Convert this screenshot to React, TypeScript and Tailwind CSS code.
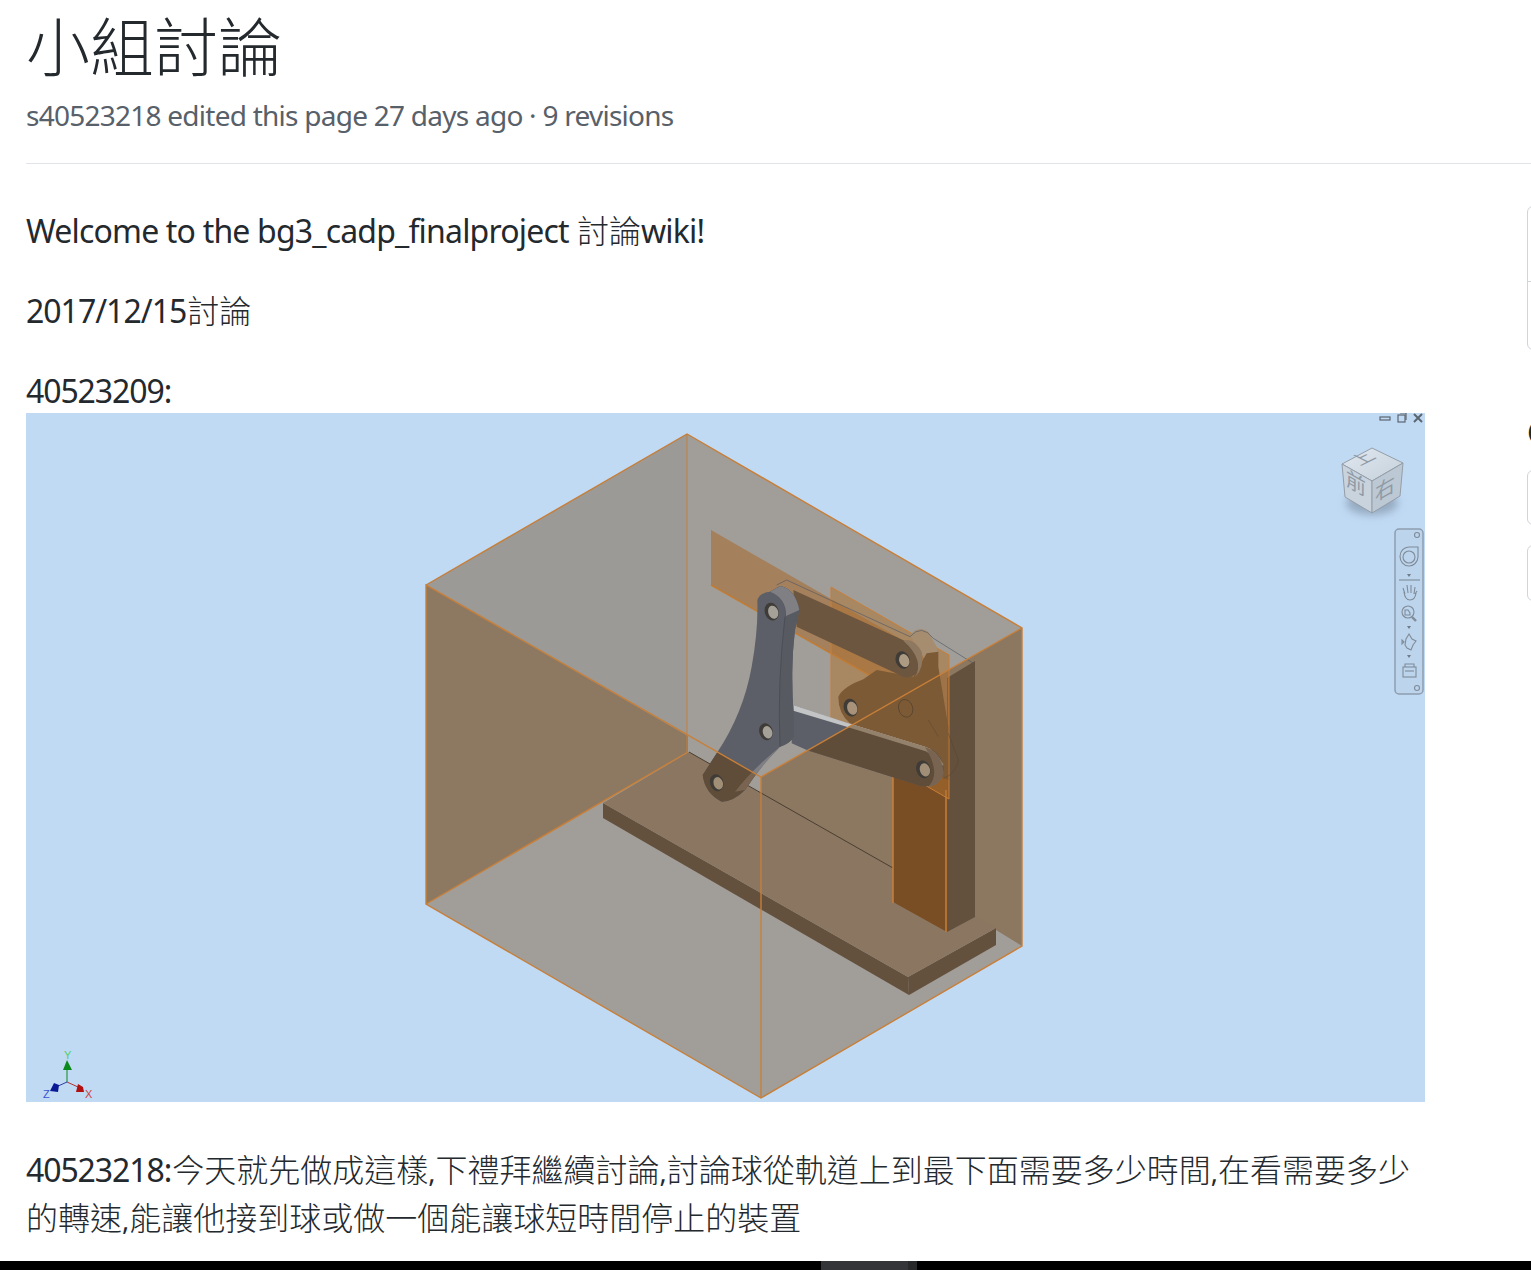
const BODY_FONT = "[font-family:'Noto_Sans','Noto_Sans_CJK_TC',sans-serif]";

type Palette = { face: string; side: string; lug: string; band: string; hole: string };

const GRAY: Palette = { face: '#5c5f68', side: '#585a61', lug: '#7f7f84', band: '#c2c4c6', hole: '#a5a198' };
const TINTED: Palette = { face: '#5f4d3a', side: '#5a4937', lug: '#786450', band: '#93816c', hole: '#a08e76' };

// narrows the latin runs so they sit like the original font, cjk stays full width
function Mixed({ text, tracking }: { text: string; tracking: string }) {
  const parts = text.split(/([\x00-\x7f]+)/).filter(Boolean);
  return (
    <>
      {parts.map((part, i) => {
        if (part === ',') return <span key={i} className="text-[27px] leading-none">,</span>;
        if (/^[\x00-\x7f]/.test(part)) return <span key={i} className={tracking}>{part}</span>;
        return <span key={i} className="font-light">{part}</span>;
      })}
    </>
  );
}

function Hole({ cx, cy, rx = 21, ry = 27, inner }: { cx: number; cy: number; rx?: number; ry?: number; inner: string }) {
  return (
    <g transform={`rotate(-18 ${cx} ${cy})`}>
      <ellipse cx={cx} cy={cy} rx={rx} ry={ry} fill="#3f3c38" />
      <ellipse cx={cx + 4} cy={cy + 3} rx={rx - 6} ry={ry - 7} fill={inner} />
    </g>
  );
}

// lower link + big crank, drawn twice so the part behind the wall can be tinted
function FrontParts({ p }: { p: Palette }) {
  return (
    <g>
      <path d="M340,555 L500,610 L735,682 Q790,695 792,760 Q770,808 720,797 L380,690 L335,670 Z" fill={p.face} />
      <path d="M340,555 L500,608 L735,680 Q770,690 790,735 L772,745 Q760,695 725,690 L500,620 L340,572 Z" fill={p.band} />
      <path d="M735,682 Q782,692 792,760 Q775,800 745,800 Q785,760 735,682 Z" fill={p.lug} />
      <Hole cx={730} cy={748} inner={p.hole} />
      <path d="M232,240 Q240,218 270,215 L300,198 Q345,205 358,270 L345,330 Q330,450 342,600 L342,650 Q330,670 300,680 Q240,740 195,810 Q160,845 125,845 Q75,820 68,765 L110,700 Q190,580 215,440 Q235,330 232,240 Z" fill={p.face} />
      <path d="M270,215 L300,198 Q345,205 358,270 L345,330 Q330,450 342,600 L342,650 Q330,670 300,680 Q292,500 315,290 Q320,235 270,215 Z" fill={p.side} />
      <path d="M270,215 L300,198 Q345,205 358,270 L318,288 Q320,235 270,215 Z" fill={p.lug} />
      <path d="M300,680 Q240,740 195,810 L165,815 Q215,750 300,680 Z" fill={p.lug} />
      <path d="M315,290 Q292,480 300,680" fill="none" stroke="#3f3f45" strokeWidth="1.5" />
      <Hole cx={275} cy={275} inner={p.hole} />
      <Hole cx={258} cy={635} rx={20} ry={26} inner={p.hole} />
      <Hole cx={110} cy={788} rx={20} ry={26} inner={p.hole} />
    </g>
  );
}

function CadView() {
  return (
    <svg viewBox="26 413 1399 689" className="block w-[1399px] h-[689px]">
      <defs>
        <clipPath id="behindWall">
          <polygon points="426,585 761,777 1022,628 1022,1100 426,1100" />
        </clipPath>
        <filter id="soft" x="-50%" y="-50%" width="200%" height="200%">
          <feGaussianBlur stdDeviation="4" />
        </filter>
        <linearGradient id="cubeTop" x1="0" y1="0" x2="1" y2="1">
          <stop offset="0" stopColor="#e0e8f0" />
          <stop offset="1" stopColor="#c6d1db" />
        </linearGradient>
      </defs>

      <rect x="26" y="413" width="1399" height="689" fill="#c1daf4" />

      {/* box */}
      <polygon points="426,585 687,434 1022,628 1022,946 761,1098 426,904" fill="#a19e99" />
      <polygon points="426,585 687,434 687,735" fill="#9c9a97" />
      <polygon points="426,585 688,736 688,752 426,904" fill="#8d7862" />
      <polygon points="761,777 1022,628 1022,946 975,917 761,800" fill="#8c7761" />

      {/* plate */}
      <polygon points="603,803 908,977 909,995 603,818" fill="#63503d" />
      <polygon points="908,977 996,928 996,945 909,995" fill="#63503d" />
      <polygon points="689,752 603,803 908,977 996,928" fill="#8b7661" />
      <polyline points="689,752 893,868" fill="none" stroke="#4b3e30" strokeWidth="1" />

      {/* post */}
      <polygon points="893,760 947,760 947,932 893,902" fill="#7a4e24" />
      <polygon points="947,678 975,661 975,917 947,932" fill="#63503d" />
      <line x1="893" y1="770" x2="893" y2="903" stroke="#c87f38" strokeWidth="1.5" />
      <line x1="946" y1="790" x2="946" y2="932" stroke="#c87f38" strokeWidth="1.5" />

      {/* planes */}
      <polygon points="711,530 925,653 925,707 711,585" fill="#a8672a" fillOpacity="0.55" />
      <polygon points="831,587 949,655 949,799 831,731" fill="#b06f2e" fillOpacity="0.5" />
      <polyline points="711,585 925,707 925,653" fill="none" stroke="#c07c34" strokeWidth="1.5" />
      <polygon points="831,587 949,655 949,799 831,731" fill="none" stroke="#c87f38" strokeWidth="1" />

      {/* mechanism, coordinates taken at 3x from (680,520) */}
      <g transform="translate(680 520) scale(0.33333)">
        <path d="M690,345 Q715,315 745,335 L770,380 L775,440 L735,420 Z" fill="#a78d70" />
        <path d="M475,530 Q490,500 550,478 L590,450 L700,470 L740,400 L775,395 L775,440 L805,620 L805,780 L790,775 L735,690 L510,610 Q475,580 475,530 Z" fill="#7c5a35" />
        <path d="M745,600 L775,650 M805,640 L835,720 Q830,760 790,775" fill="none" stroke="#5a4730" strokeWidth="1.5" />
        <ellipse cx="677" cy="565" rx="21" ry="27" transform="rotate(-18 677 565)" fill="none" stroke="#50402c" strokeWidth="2" />
        <Hole cx={512} cy={563} inner="#a8927a" />
        <path d="M340,210 L680,365 Q730,385 725,440 Q700,480 670,470 L350,320 Z" fill="#6c563f" />
        <path d="M670,362 Q700,352 725,395 Q735,440 705,472 Q735,420 670,362 Z" fill="#8e7860" />
        <Hole cx={668} cy={420} inner="#ad9a82" />
        <path d="M290,195 L320,180 L690,350 Q725,310 760,355 L880,430" fill="none" stroke="#525a66" strokeWidth="2" />
        <FrontParts p={GRAY} />
      </g>
      <g clipPath="url(#behindWall)">
        <g transform="translate(680 520) scale(0.33333)">
          <FrontParts p={TINTED} />
        </g>
      </g>

      {/* box edges */}
      <g fill="none" stroke="#c87f38" strokeWidth="1.4">
        <polyline points="426,585 687,434 1022,628 1022,946 761,1098 426,904 426,585 761,777 1022,628" />
        <line x1="761" y1="777" x2="761" y2="1098" />
        <line x1="426" y1="904" x2="688" y2="752" />
        <line x1="687" y1="434" x2="687" y2="752" strokeOpacity="0.7" />
      </g>

      {/* window buttons */}
      <g fill="none" stroke="#5c6670" strokeWidth="1.2">
        <rect x="1380" y="417" width="10" height="3" />
        <rect x="1398" y="415" width="7" height="7" />
        <path d="M1400,413 L1406,413 L1406,420" />
        <path d="M1414,414 L1422,422 M1422,414 L1414,422" strokeWidth="2" />
      </g>

      {/* view cube */}
      <ellipse cx="1372" cy="503" rx="26" ry="12" fill="#6f8296" fillOpacity="0.55" filter="url(#soft)" />
      <polygon points="1372,448 1403,463 1372,481 1342,464" fill="url(#cubeTop)" stroke="#949ea8" />
      <polygon points="1342,464 1372,481 1372,513 1345,497" fill="#c8d3dd" stroke="#949ea8" />
      <polygon points="1403,463 1372,481 1372,513 1400,496" fill="#bcc8d3" stroke="#949ea8" />
      <g fill="#8f9aa5" className="[font-family:'Noto_Sans_CJK_TC',sans-serif]">
        <text transform="matrix(1 -0.5 1 0.5 1360 466)" fontSize="17">上</text>
        <text transform="matrix(0.95 0.55 0 1 1346 485)" fontSize="21">前</text>
        <text transform="matrix(0.95 -0.55 0 1 1375 502)" fontSize="21">右</text>
      </g>

      {/* navigation bar */}
      <rect x="1395" y="529" width="28" height="165" rx="4" fill="#bcd4ec" stroke="#8d9dad" strokeWidth="1.5" />
      <g fill="none" stroke="#7f8c99" strokeWidth="1.1">
        <circle cx="1417" cy="535" r="2.5" />
        <circle cx="1417" cy="688" r="2.5" />
        <path d="M1409,547 L1418,547 L1418,557 A9,9.5 0 1 1 1409,547 Z" />
        <circle cx="1409" cy="557" r="6" />
        <line x1="1399" y1="580" x2="1420" y2="580" />
        <path d="M1405,594 L1403,588 M1408,593 L1407,585 M1411,593 L1411,585 M1414,594 L1415,587 M1415,594 L1417,591 M1404,592 Q1405,600 1410,600 Q1415,600 1416,593" />
        <circle cx="1408" cy="612" r="6" />
        <path d="M1405,610 L1408,610 L1410,613 L1410,615 L1405,615 Z" />
        <line x1="1412" y1="617" x2="1416" y2="621" strokeWidth="2.4" />
        <path d="M1409,634 L1412,639 L1416,641 L1413,645 L1411,650 L1407,648 L1405,645 L1406,639 Z" />
        <path d="M1404,642 L1402,640 L1402,644 Z" />
        <rect x="1403" y="667" width="13" height="10" />
        <line x1="1405" y1="671" x2="1414" y2="671" />
        <path d="M1405,667 L1405,664 L1414,664 L1414,667" />
      </g>
      <g fill="#6f7c89">
        <polygon points="1407,574 1411,574 1409,577" />
        <polygon points="1407,626 1411,626 1409,629" />
        <polygon points="1407,655 1411,655 1409,658" />
      </g>

      {/* axis triad */}
      <line x1="67" y1="1082" x2="67" y2="1066" stroke="#0b8a1c" strokeWidth="1" />
      <line x1="67" y1="1082" x2="56" y2="1087" stroke="#2a3aa8" strokeWidth="1" />
      <line x1="67" y1="1082" x2="78" y2="1087" stroke="#b03030" strokeWidth="1" />
      <polygon points="67,1060 72,1070 63,1070" fill="#0b8a1c" />
      <polygon points="54,1083 59,1085 58,1092 50,1091" fill="#0a1a96" />
      <polygon points="78,1084 83,1087 84,1092 76,1092" fill="#b01010" />
      <g fontSize="11" className="[font-family:'Liberation_Sans',sans-serif]">
        <text x="64" y="1059" fill="#4fd06a">Y</text>
        <text x="43" y="1098" fill="#3a55d0">Z</text>
        <text x="85" y="1098" fill="#d04040">X</text>
      </g>
    </svg>
  );
}

function Sidebar() {
  return (
    <aside className="ml-[102px] w-[400px] shrink-0 pt-[42px]">
      <div className="h-[144px] rounded-md border border-[#d1d5da]">
        <div className="h-[75px] border-b border-[#d1d5da]" />
      </div>
      <h3 className="mt-[65px] h-[55px] text-[32px] leading-[34px] font-semibold text-[#24292e] whitespace-nowrap">Clone this wiki locally</h3>
      <div className="h-[55px] rounded-md border border-[#d1d5da]" />
      <div className="mt-[20px] h-[56px] rounded-md border border-[#d1d5da]" />
    </aside>
  );
}

export default function App() {
  return (
    <div className={`h-[1270px] w-[1531px] overflow-hidden flex flex-col bg-white text-[#24292e] ${BODY_FONT}`}>
      <div className="h-[1261px] pl-[26px]">
        <header className="h-[164px] border-b border-[#e1e4e8]">
          <h1 className="pt-[11px] text-[64px] leading-[72px] font-light">小組討論</h1>
          <p className="mt-[11px] text-[28px] leading-[42px] tracking-[-0.75px] text-[#586069] whitespace-nowrap">
            s40523218 edited this page 27 days ago · 9 revisions
          </p>
        </header>

        <div className="flex">
          <article className="w-[1399px] shrink-0 pt-[43px] text-[32px] leading-[48px]">
            <p><Mixed text="Welcome to the bg3_cadp_finalproject 討論wiki!" tracking="tracking-[-0.82px] pr-[0.82px]" /></p>
            <p className="mt-[32px]"><Mixed text="2017/12/15討論" tracking="tracking-[-1px] pr-[1px]" /></p>
            <p className="mt-[32px] h-[46px] tracking-[-1.1px]">40523209:</p>
            <CadView />
            <p className="mt-[44px]">
              <Mixed
                text="40523218:今天就先做成這樣,下禮拜繼續討論,討論球從軌道上到最下面需要多少時間,在看需要多少的轉速,能讓他接到球或做一個能讓球短時間停止的裝置"
                tracking="tracking-[-1.1px] pr-[1.1px]"
              />
            </p>
          </article>
          <Sidebar />
        </div>
      </div>

      {/* taskbar sliver */}
      <div className="h-[9px] bg-black flex pl-[821px]">
        <div className="w-[87px] bg-[#333538]" />
        <div className="w-[9px] bg-[#26282a]" />
      </div>
    </div>
  );
}
